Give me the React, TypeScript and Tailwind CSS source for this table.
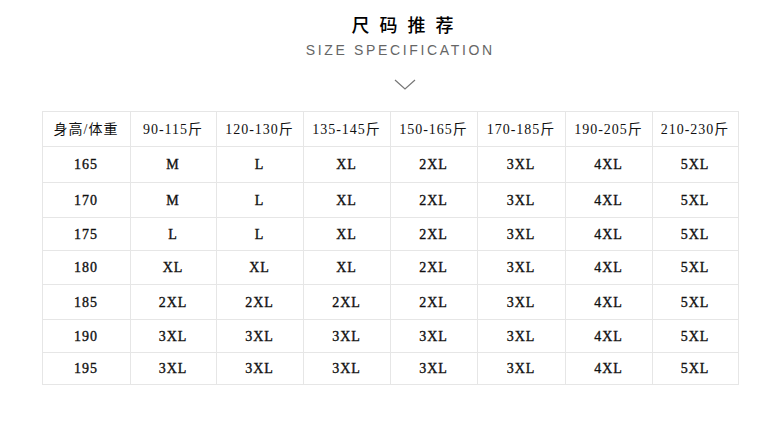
import React from "react";

const headers = ["身高/体重", "90-115斤", "120-130斤", "135-145斤", "150-165斤", "170-185斤", "190-205斤", "210-230斤"];
const rows: string[][] = [
  ["165", "M", "L", "XL", "2XL", "3XL", "4XL", "5XL"],
  ["170", "M", "L", "XL", "2XL", "3XL", "4XL", "5XL"],
  ["175", "L", "L", "XL", "2XL", "3XL", "4XL", "5XL"],
  ["180", "XL", "XL", "XL", "2XL", "3XL", "4XL", "5XL"],
  ["185", "2XL", "2XL", "2XL", "2XL", "3XL", "4XL", "5XL"],
  ["190", "3XL", "3XL", "3XL", "3XL", "3XL", "4XL", "5XL"],
  ["195", "3XL", "3XL", "3XL", "3XL", "3XL", "4XL", "5XL"],
];

export default function App() {
  const all = [headers, ...rows];
  return (
    <div className="w-[780px] h-[437px] bg-white flex flex-col items-center overflow-hidden">
      <div
        className="mt-[14px] ml-[25px] h-[20px] leading-[20px] text-[18px] tracking-[10px] pl-[10px] font-medium text-black"
        style={{ fontFamily: '"Noto Sans CJK SC", sans-serif' }}
      >
        尺码推荐
      </div>
      <div
        className="mt-[9px] ml-[18px] h-[14px] leading-[14px] text-[14px] tracking-[2.65px] pl-[2.65px] text-[#666]"
        style={{ fontFamily: '"Liberation Sans", Arial, sans-serif' }}
      >
        SIZE SPECIFICATION
      </div>
      <svg className="mt-[22px] ml-[30px]" width="22" height="11" viewBox="0 0 22 11">
        <polyline points="1,1 11,10 21,1" fill="none" stroke="#777" strokeWidth="1.2" />
      </svg>
      <div
        className="mt-[21px] w-[697px] grid grid-cols-[88px_86px_87px_87px_87px_88px_87px_86px] grid-rows-[35px_36px_35px_33px_34px_35px_33px_32px] border-t border-l border-[#e6e6e6] text-[14px] text-[#111]"
        style={{ fontFamily: '"Liberation Serif", "Noto Sans CJK SC", serif' }}
      >
        {all.map((r, i) =>
          r.map((c, j) => (
            <div
              key={`${i}-${j}`}
              className={`flex items-center justify-center border-r border-b border-[#e6e6e6] ${i === 0 ? "tracking-[1px]" : "tracking-[1px] [-webkit-text-stroke:0.35px_#111]"}`}
            >
              {c}
            </div>
          ))
        )}
      </div>
    </div>
  );
}
